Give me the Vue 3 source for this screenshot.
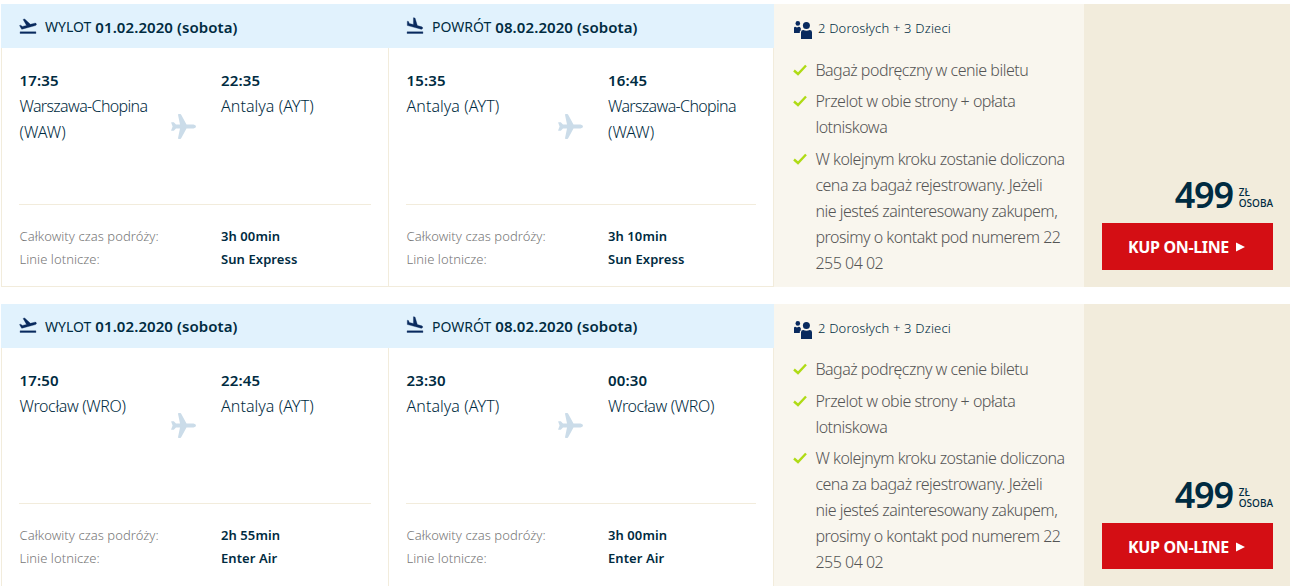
<template>
  <main class="offers">
    <article v-for="offer in offers" :key="offer.id" class="offer">

      <!-- FLIGHTS -->
      <section v-for="leg in offer.legs" :key="leg.label" class="leg">
        <header class="leg__head">
          <svg class="leg__icon" viewBox="0 0 24 24">
            <path :d="leg.label === 'WYLOT' ? takeoffIcon : landingIcon" />
          </svg>
          <span class="leg__label">{{ leg.label }}</span>
          <strong class="leg__date">{{ leg.date }} (sobota)</strong>
        </header>

        <div class="leg__body">
          <div class="route">
            <div class="stop">
              <strong>{{ leg.departure }}</strong>
              <p :class="'city--' + leg.from.code">{{ leg.from.name }}</p>
              <p v-if="leg.from.airport">{{ leg.from.airport }}</p>
            </div>
            <svg class="route__plane" viewBox="0 0 25 25">
              <path d="M7 .7Q7 0 7.8 0H9.2Q9.8 0 10.2.7L15.5 10.4H22.5Q25 10.8 25 12.5T22.5 14.6H15.5L10.2 24.3Q9.8 25 9.2 25H7.8Q7 25 7 24.3L9 14.6H5L2.8 16.8H.6Q0 16.8.2 16.2L1.6 12.5.2 8.8Q0 8.2.6 8.2H2.8L5 10.4H9Z" />
            </svg>
            <div class="stop">
              <strong>{{ leg.arrival }}</strong>
              <p :class="'city--' + leg.to.code">{{ leg.to.name }}</p>
              <p v-if="leg.to.airport">{{ leg.to.airport }}</p>
            </div>
          </div>

          <dl class="details">
            <dt>Całkowity czas podróży:</dt>
            <dd>{{ leg.duration }}</dd>
            <dt>Linie lotnicze:</dt>
            <dd>{{ leg.airline }}</dd>
          </dl>
        </div>
      </section>

      <!-- PASSENGERS -->
      <section class="info">
        <div class="info__people">
          <svg viewBox="0 0 18 18">
            <circle cx="3.8" cy="2.4" r="2.3" />
            <path d="M0 7Q0 5.8 1.2 5.8L3 6.5 4.8 5.8Q6 5.8 6.8 7.2V9.3L5.8 10.4V12H0Z" />
            <circle cx="12.4" cy="4.4" r="3.5" />
            <path d="M7 18V11.3Q7 9 9.3 9Q12.4 10.4 15.7 9Q18 9 18 11.3V18Z" />
          </svg>
          <span>2 Dorosłych + 3 Dzieci</span>
        </div>
        <ul class="info__list">
          <li v-for="item in benefits" :key="item[0]">
            <svg viewBox="0 0 14 12"><path d="M1 6.5L5 10 13 1.5" /></svg>
            <div>
              <p v-for="line in item" :key="line">{{ line }}</p>
            </div>
          </li>
        </ul>
      </section>

      <!-- PRICE -->
      <aside class="buy">
        <div class="buy__price">
          <strong>499</strong>
          <span>ZŁ<br>OSOBA</span>
        </div>
        <button class="buy__button" type="button">
          <span>KUP ON-LINE</span>
          <svg viewBox="0 0 9 10"><path d="M0 0.5L9 5L0 9.5Z" /></svg>
        </button>
      </aside>

    </article>
  </main>
</template>

<script setup>
const takeoffIcon = 'M2.5 19h19v2h-19zm19.57-9.36c-.21-.8-1.04-1.28-1.84-1.06L14.92 10l-6.9-6.43-1.93.51 4.14 7.17-4.97 1.33-1.97-1.54-1.45.39 1.82 3.16.77 1.33 1.6-.43 5.31-1.42 4.35-1.16L21 11.49c.81-.23 1.28-1.05 1.07-1.85z'
const landingIcon = 'M2.5 19h19v2h-19zm7.18-5.73l4.35 1.16 5.31 1.42c.8.21 1.62-.26 1.84-1.06.21-.8-.26-1.62-1.06-1.84l-5.31-1.42-2.76-9.02L10.12 2v8.28L5.15 8.95l-.93-2.32-1.45-.39v5.17l1.6.43 5.31 1.43z'

const warsaw = { code: 'waw', name: 'Warszawa-Chopina', airport: '(WAW)' }
const wroclaw = { code: 'wro', name: 'Wrocław (WRO)' }
const antalya = { code: 'ayt', name: 'Antalya (AYT)' }

const offers = [
  {
    id: 1,
    legs: [
      { label: 'WYLOT', date: '01.02.2020', departure: '17:35', arrival: '22:35', from: warsaw, to: antalya, duration: '3h 00min', airline: 'Sun Express' },
      { label: 'POWRÓT', date: '08.02.2020', departure: '15:35', arrival: '16:45', from: antalya, to: warsaw, duration: '3h 10min', airline: 'Sun Express' }
    ]
  },
  {
    id: 2,
    legs: [
      { label: 'WYLOT', date: '01.02.2020', departure: '17:50', arrival: '22:45', from: wroclaw, to: antalya, duration: '2h 55min', airline: 'Enter Air' },
      { label: 'POWRÓT', date: '08.02.2020', departure: '23:30', arrival: '00:30', from: antalya, to: wroclaw, duration: '3h 00min', airline: 'Enter Air' }
    ]
  }
]

const benefits = [
  ['Bagaż podręczny w cenie biletu'],
  ['Przelot w obie strony + opłata', 'lotniskowa'],
  [
    'W kolejnym kroku zostanie doliczona',
    'cena za bagaż rejestrowany. Jeżeli',
    'nie jesteś zainteresowany zakupem,',
    'prosimy o kontakt pod numerem 22',
    '255 04 02'
  ]
]
</script>

<style>
html,
body {
  margin: 0;
  height: 100%;
  overflow: hidden;
  background: #fff;
}
</style>

<style scoped>
.offers {
  box-sizing: border-box;
  height: 586px;
  padding: 4px 5px 0 1px;
  overflow: hidden;
  font-family: "Noto Sans", "Open Sans", sans-serif;
  font-size: 16px;
  font-weight: 350;
  color: #002b41;
  white-space: nowrap;
}

.offer {
  display: grid;
  grid-template-columns: 387px 386px 310px 206px;
  height: 283px;
  margin-bottom: 16.5px;
}

p {
  margin: 0;
}

/* FLIGHT */
.leg {
  box-sizing: border-box;
  display: flex;
  flex-direction: column;
}

.leg__head {
  display: flex;
  align-items: center;
  box-sizing: border-box;
  height: 44px;
  padding: 1.5px 0 0 17px;
  background: #e1f2fd;
}

.leg__icon {
  width: 20px;
  height: 20px;
  margin: -2px 7px 0 0;
  fill: #092a5e;
  stroke: #092a5e;
  stroke-width: 0.4;
}

.leg__label {
  font-size: 14px;
  font-weight: 400;
  margin-right: 4px;
}

.leg__date {
  font-size: 15px;
  font-weight: 600;
  letter-spacing: 0.08px;
}

.leg__body {
  flex: 1;
  box-sizing: border-box;
  padding: 19.3px 17px 0;
  border-left: 1px solid #f2ecdc;
  border-bottom: 1px solid #f2ecdc;
}

.leg + .leg .leg__body {
  border-right: 1px solid #f2ecdc;
}

.route {
  display: grid;
  grid-template-columns: 152px 50px 1fr;
  height: 136.5px;
  border-bottom: 1px solid #f2ecdc;
  line-height: 26px;
}

.route__plane {
  width: 25px;
  height: 25px;
  margin-top: 46.5px;
  fill: #cbdce9;
}

.stop strong {
  font-size: 15px;
  font-weight: 600;
  letter-spacing: 0.15px;
}

.stop:first-child {
  padding-left: 0.5px;
}

.city--waw {
  letter-spacing: -0.65px;
}

.city--wro {
  letter-spacing: -0.35px;
}

.city--ayt {
  letter-spacing: 0.06px;
}

.details {
  display: grid;
  grid-template-columns: 201.5px 1fr;
  margin: 20px 0 0 0.5px;
  font-size: 13px;
  line-height: 23px;
}

.details dt {
  color: #777;
  letter-spacing: 0.05px;
}

.details dd {
  margin: 0;
  font-weight: 600;
  letter-spacing: 0.08px;
}

/* PASSENGERS */
.info {
  padding-left: 20px;
  background: #f9f6ee;
}

.info__people {
  display: flex;
  align-items: flex-end;
  height: 35px;
  gap: 6px;
  font-size: 13px;
  letter-spacing: 0.18px;
}

.info__people svg {
  width: 18px;
  height: 18px;
  fill: #092a5e;
}

.info__people span {
  line-height: 22px;
}

.info__list {
  margin: 17.5px 0 0;
  padding: 0;
  list-style: none;
  color: #555;
  line-height: 26px;
  letter-spacing: -0.49px;
}

.info__list li {
  display: flex;
  gap: 8.4px;
  margin-bottom: 5.5px;
}

.info__list svg {
  width: 14px;
  height: 12px;
  margin: 7px 0 0 -1px;
  fill: none;
  stroke: #afdb15;
  stroke-width: 2.4;
}

/* PRICE */
.buy {
  display: flex;
  flex-direction: column;
  justify-content: flex-end;
  padding: 0 17px 17.3px 18px;
  background: #f2ecdc;
}

.buy__price {
  display: flex;
  justify-content: flex-end;
  align-items: flex-end;
  gap: 6px;
  height: 40px;
  margin-bottom: 8px;
}

.buy__price strong {
  font-size: 36px;
  font-weight: 600;
  line-height: 40px;
  letter-spacing: -1.3px;
}

.buy__price span {
  font-size: 10px;
  font-weight: 500;
  line-height: 11px;
  padding-bottom: 6px;
}

.buy__button {
  display: flex;
  align-items: center;
  justify-content: center;
  gap: 7px;
  height: 46.5px;
  padding: 1.4px 2px 0 0;
  border: 0;
  background: #d40e14;
  color: #fff;
  font-family: inherit;
  font-size: 16px;
  font-weight: 700;
  letter-spacing: -0.35px;
}

.buy__button svg {
  width: 9px;
  height: 10px;
  fill: #fff;
}
</style>
